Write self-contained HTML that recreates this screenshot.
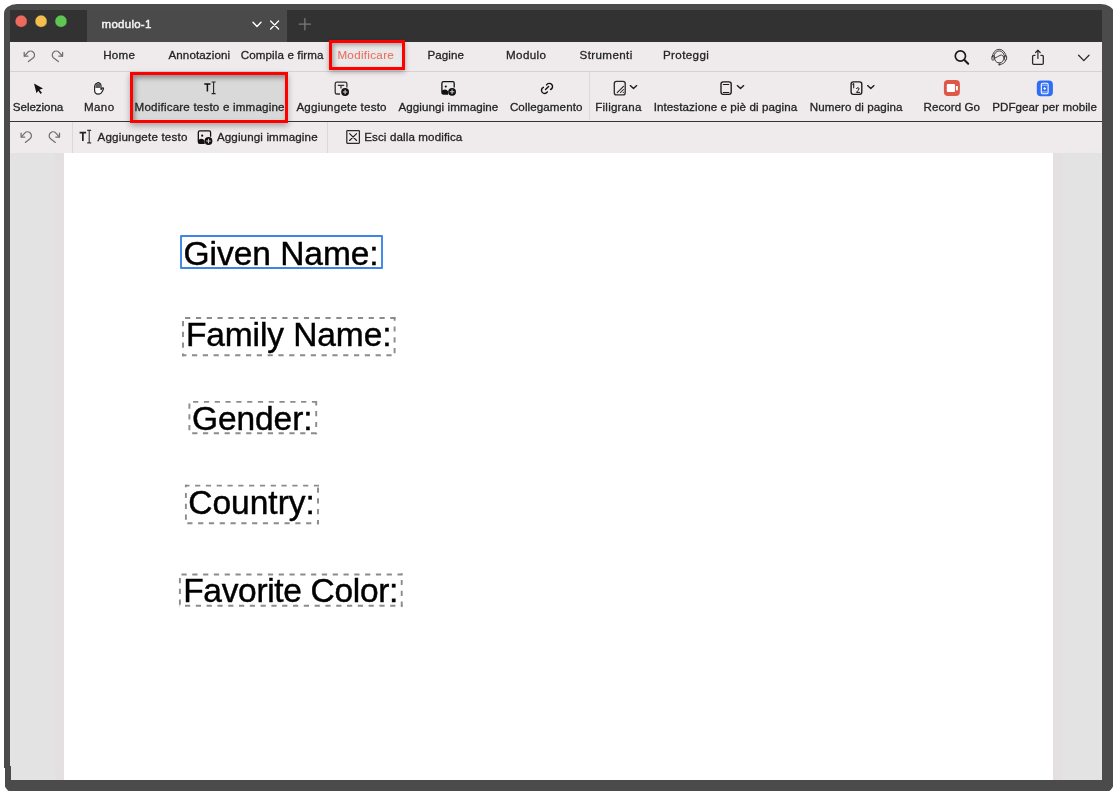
<!DOCTYPE html>
<html><head><meta charset="utf-8">
<style>
*{box-sizing:border-box;margin:0;padding:0}
html,body{width:1113px;height:791px;overflow:hidden;background:#fff;font-family:"Liberation Sans",sans-serif}
.r{position:absolute}
.t{position:absolute;white-space:pre;line-height:20px;font-family:"Liberation Sans",sans-serif;transform:translateZ(0);-webkit-text-stroke:0.3px currentColor}
svg{position:absolute;left:0;top:0}
</style></head><body>
<div class="r" style="left:4px;top:4px;width:1110px;height:789px;background:#4b4b4b;border-radius:13px 13px 11px 11px / 9.5px 9.5px 11px 11px"></div>
<div class="r" style="left:4px;top:768px;width:1px;height:23px;background:#fff"></div>
<div class="r" style="left:10px;top:10px;width:1092px;height:32px;background:#323232"></div>
<div class="r" style="left:87px;top:10px;width:200px;height:32px;background:#4a4a4a"></div>
<div class="r" style="left:10px;top:42px;width:1092px;height:29px;background:#efebec"></div>
<div class="r" style="left:10px;top:71px;width:1092px;height:1px;background:#d6d2d3"></div>
<div class="r" style="left:10px;top:72px;width:1092px;height:49px;background:#efebec"></div>
<div class="r" style="left:10px;top:121px;width:1092px;height:1px;background:#353535"></div>
<div class="r" style="left:10px;top:122px;width:1092px;height:1px;background:#a9a6a7"></div>
<div class="r" style="left:10px;top:122px;width:1092px;height:31px;background:#efebec"></div>
<div class="r" style="left:589px;top:72px;width:1px;height:48px;background:#dcd8d9"></div>
<div class="r" style="left:72px;top:122px;width:1px;height:31px;background:#dcd8d9"></div>
<div class="r" style="left:327px;top:122px;width:1px;height:31px;background:#dcd8d9"></div>
<div class="r" style="left:10px;top:153px;width:1092px;height:627px;background:#e3e3e3"></div>
<div class="r" style="left:10px;top:766px;width:1px;height:14px;background:#4b4b4b"></div>
<div class="r" style="left:55px;top:153px;width:1007px;height:627px;background:#e4dfe0"></div>
<div class="r" style="left:64px;top:153px;width:989px;height:627px;background:#ffffff"></div>
<!-- selected tool button -->
<div class="r" style="left:130px;top:72px;width:158px;height:51px;box-shadow:0 3px 6px rgba(0,0,0,.3)"></div>
<div class="r" style="left:133px;top:75px;width:152px;height:45px;background:#d9d9d9;box-shadow:inset 2px 3px 5px rgba(0,0,0,.35)"></div>
<div class="r" style="left:130px;top:72px;width:158px;height:51px;border:3px solid #ff0000"></div>
<!-- Modificare menu box -->
<div class="r" style="left:329px;top:40px;width:76px;height:30px;box-shadow:0 2px 5px rgba(0,0,0,.3)"></div>
<div class="r" style="left:332px;top:43px;width:70px;height:24px;background:#ebe8e9;box-shadow:inset 2px 2px 4px rgba(0,0,0,.3)"></div>
<div class="r" style="left:329px;top:40px;width:76px;height:30px;border:3px solid #ff0000"></div>
<svg width="1113" height="791" viewBox="0 0 1113 791" fill="none" stroke-linecap="round" stroke-linejoin="round">
<!-- traffic lights -->
<circle cx="21.2" cy="21.2" r="6.1" fill="#ec6a5e" stroke="#2a2a2a" stroke-width="0.5"/>
<circle cx="41.1" cy="21.2" r="6.1" fill="#f4bf4f" stroke="#2a2a2a" stroke-width="0.5"/>
<circle cx="61.0" cy="21.2" r="6.1" fill="#61c554" stroke="#2a2a2a" stroke-width="0.5"/>
<!-- tab chevron, close, plus -->
<path d="M253 22.3 L257 26.4 L261 22.3" stroke="#ffffff" stroke-width="1.4"/>
<path d="M270.6 21 L278.6 29 M278.6 21 L270.6 29" stroke="#ffffff" stroke-width="1.3"/>
<path d="M304.9 18.6 V29.8 M299.3 24.2 H310.5" stroke="#7a7a7a" stroke-width="1.3"/>
<!-- undo/redo main -->
<g id="ur" stroke="#707070" stroke-width="1.25">
<path d="M24.2 52.3 V56.2 H27.9"/>
<path d="M24.5 56 L27.8 52.3 A3.9 3.9 0 1 1 33.4 57.8 L28.4 61.6"/>
<g transform="translate(86.8,0) scale(-1,1)">
<path d="M24.2 52.3 V56.2 H27.9"/>
<path d="M24.5 56 L27.8 52.3 A3.9 3.9 0 1 1 33.4 57.8 L28.4 61.6"/>
</g>
</g>
<g transform="translate(-3.1,80.8)"><g stroke="#707070" stroke-width="1.25">
<path d="M24.2 52.3 V56.2 H27.9"/>
<path d="M24.5 56 L27.8 52.3 A3.9 3.9 0 1 1 33.4 57.8 L28.4 61.6"/>
<g transform="translate(86.8,0) scale(-1,1)">
<path d="M24.2 52.3 V56.2 H27.9"/>
<path d="M24.5 56 L27.8 52.3 A3.9 3.9 0 1 1 33.4 57.8 L28.4 61.6"/>
</g>
</g></g>
<!-- search -->
<circle cx="960.4" cy="56" r="5.1" stroke="#1a1a1a" stroke-width="1.7"/>
<path d="M964.2 59.8 L968.2 63.8" stroke="#1a1a1a" stroke-width="2"/>
<!-- headset -->
<g stroke="#3c3c3c" stroke-width="0.95">
<path d="M992.3 57.2 A6.9 7.9 0 0 1 1006.1 57.2"/>
<path d="M993.9 57 A5.3 6.1 0 0 1 1004.5 57"/>
<path d="M994.5 56.8 Q994.4 62.8 999.2 62.8 Q1004.1 62.8 1004 56.8"/>
<path d="M994.7 58.2 Q997.5 56.6 1001.2 54.9 Q1003 55.3 1003.9 57.2"/>
<rect x="991.9" y="55.6" width="2.2" height="4.6" rx="1"/>
<rect x="1004.4" y="55.6" width="2.2" height="4.6" rx="1"/>
<path d="M1005.6 60.3 Q1005 64.2 999.6 64.4"/>
</g>
<circle cx="999.4" cy="64.4" r="1.1" fill="#3c3c3c"/>
<!-- share -->
<path d="M1035 55.3 H1033.7 Q1032.6 55.3 1032.6 56.4 V63.3 Q1032.6 64.4 1033.7 64.4 H1042.2 Q1043.3 64.4 1043.3 63.3 V56.4 Q1043.3 55.3 1042.2 55.3 H1040.9" stroke="#2a2a2a" stroke-width="1.3"/>
<path d="M1037.9 50.3 V58.5 M1035.6 52.5 L1037.9 50.2 L1040.2 52.5" stroke="#2a2a2a" stroke-width="1.2"/>
<!-- chevron right -->
<path d="M1078.6 55.3 L1083.8 60.6 L1089 55.3" stroke="#2a2a2a" stroke-width="1.3"/>

<!-- Seleziona cursor -->
<path d="M34 83.6 L43 88.5 L39.4 89.7 L41.9 92.7 L40.6 93.9 L38.2 90.7 L36.5 93.2 Z" fill="#111"/>
<!-- Mano hand -->
<path d="M94.6 86.3 Q95 83.7 97.1 83.1 L98.3 82.5 L99.5 83.1 Q100.9 83.8 101 85.6 V89.6 L102.2 88.1 Q103.3 87.4 103.5 88.7 L102.3 91.4 Q101.3 94.1 98.4 94.1 Q94.6 94.1 94.6 90.3 Z" fill="#ffffff" stroke="#262626" stroke-width="1.2"/>
<path d="M95.3 88 V86.4 Q95.6 84.2 97.3 83.8 L98.3 83.2 L99.3 83.8 Q100.4 84.4 100.4 85.8 V88 Z" fill="#5e5e5e"/>
<!-- T I-beam (selected) -->
<path d="M204.3 83.9 H210.5 M207.4 83.9 V91.4" stroke="#111" stroke-width="1.5" stroke-linecap="butt"/>
<path d="M211.6 82 H215.6 M211.6 93.6 H215.6 M213.6 82 V93.6" stroke="#222" stroke-width="1.1" stroke-linecap="butt"/>
<!-- Aggiungete testo icon -->
<path d="M340 94 H336.8 Q335.2 94 335.2 92.4 V83.8 Q335.2 82.2 336.8 82.2 H345.3 Q346.9 82.2 346.9 83.8 V87.5" stroke="#333" stroke-width="1.3" stroke-linecap="butt"/>
<path d="M337.8 85.4 H344.2 M341 85.4 V88.4" stroke="#333" stroke-width="1.3" stroke-linecap="butt"/>
<circle cx="345.1" cy="92" r="3.9" fill="#111"/>
<path d="M345.1 89.8 V94.2 M342.9 92 H347.3" stroke="#cfcfcf" stroke-width="1.1" stroke-linecap="butt"/>
<!-- Aggiungi immagine icon -->
<g id="imgicon">
<path d="M448.2 94.1 H443.5 Q441.9 94.1 441.9 92.5 V83.3 Q441.9 81.7 443.5 81.7 H452.7 Q454.2 81.7 454.2 83.3 V87.5" stroke="#111" stroke-width="1.3" stroke-linecap="butt"/>
<circle cx="445.8" cy="86.5" r="1.1" fill="#111"/>
<path d="M442 90.5 Q444 89.5 445 89.5 Q447 89.5 448.2 91.5 V94.1 H442 Z" fill="#111"/>
<circle cx="452.1" cy="91.8" r="3.9" fill="#111"/>
<path d="M452.1 89.6 V94 M449.9 91.8 H454.3" stroke="#cfcfcf" stroke-width="1.1" stroke-linecap="butt"/>
</g>
<!-- Collegamento link -->
<g stroke="#111" stroke-width="1.4">
<path d="M546.6 84.9 A3.2 3.2 0 1 1 550.6 89.5"/>
<path d="M547.4 91.9 A3.2 3.2 0 1 1 543.4 87.3"/>
<path d="M545.5 89.5 L548.6 86.4"/>
</g>
<!-- Filigrana -->
<rect x="614.3" y="81.4" width="10.9" height="13.5" rx="2.2" stroke="#2c2c2c" stroke-width="1.35"/>
<path d="M617.2 92.6 L623.5 86.3 M620.5 92.5 L623.5 89.5 M623.2 92.5 L623.4 92.3" stroke="#1e1e1e" stroke-width="1.05"/>
<path d="M630.3 85.6 L633.5 88.6 L636.7 85.6" stroke="#1a1a1a" stroke-width="1.35"/>
<!-- Intestazione -->
<rect x="721" y="81.9" width="10.2" height="12.4" rx="2.2" stroke="#1a1a1a" stroke-width="1.35"/>
<path d="M723.3 84.5 H728.8 M723.3 92.5 H728.8" stroke="#1a1a1a" stroke-width="1.1"/>
<path d="M737.3 85.6 L740.5 88.6 L743.7 85.6" stroke="#1a1a1a" stroke-width="1.35"/>
<!-- Numero di pagina -->
<rect x="851.1" y="81.9" width="10.7" height="12.4" rx="2.2" stroke="#1a1a1a" stroke-width="1.35"/>
<path d="M852.8 84.4 L853.7 83.6 V87.7" stroke="#1a1a1a" stroke-width="1.05"/>
<path d="M856.5 88.6 Q856.8 87.7 857.9 87.7 Q859.1 87.8 859 88.9 Q858.8 90 856.4 92.4 H859.6" stroke="#1a1a1a" stroke-width="1"/>
<path d="M867.6 85.6 L870.8 88.6 L874 85.6" stroke="#1a1a1a" stroke-width="1.35"/>
<!-- Record Go -->
<rect x="943.9" y="80.1" width="16" height="15.9" rx="4" fill="#de5849"/>
<rect x="946.8" y="84" width="8.2" height="8.1" rx="1" fill="#ffffff"/>
<rect x="955.9" y="86" width="2" height="4.2" rx="0.5" fill="#ffffff"/>
<!-- PDFgear -->
<rect x="1036.8" y="80.5" width="16.1" height="15.7" rx="4" fill="#2f6ef4"/>
<rect x="1041.3" y="83.3" width="6.8" height="10.4" rx="1.2" stroke="#ffffff" stroke-width="1.1"/>
<path d="M1042.5 85.2 H1046.9 M1042.5 92 H1046.9" stroke="#cfe0ff" stroke-width="0.8"/>
<path d="M1043.2 88.6 L1044.7 87.1 L1046.2 88.6 L1044.7 90.1 Z" fill="#ffffff"/>

<!-- secondary toolbar T I-beam -->
<path d="M79.6 132.7 H86.1 M82.85 132.7 V140.9" stroke="#222" stroke-width="1.7" stroke-linecap="butt"/>
<path d="M87.2 130.4 H91.2 M87.2 142.9 H91.2 M89.2 130.4 V142.9" stroke="#333" stroke-width="1.1" stroke-linecap="butt"/>
<g transform="translate(-243.6,49.2)"><g>
<path d="M448.2 94.1 H443.5 Q441.9 94.1 441.9 92.5 V83.3 Q441.9 81.7 443.5 81.7 H452.7 Q454.2 81.7 454.2 83.3 V87.5" stroke="#111" stroke-width="1.3" stroke-linecap="butt"/>
<circle cx="445.8" cy="86.5" r="1.1" fill="#111"/>
<path d="M442 90.5 Q444 89.5 445 89.5 Q447 89.5 448.2 91.5 V94.1 H442 Z" fill="#111"/>
<circle cx="452.1" cy="91.8" r="3.9" fill="#111"/>
<path d="M452.1 89.6 V94 M449.9 91.8 H454.3" stroke="#cfcfcf" stroke-width="1.1" stroke-linecap="butt"/>
</g></g>
<!-- X box -->
<rect x="346.8" y="130.7" width="12.6" height="12.6" rx="0.5" stroke="#2a2a2a" stroke-width="1.25"/>
<path d="M349.6 133.6 L356.6 140.5 M356.6 133.6 L349.6 140.5" stroke="#1a1a1a" stroke-width="1.1"/>

<!-- document boxes -->
<rect x="181" y="236" width="201" height="32" stroke="#3d86e8" stroke-width="1.9"/>
<g stroke="#8c8c8c" stroke-width="1.9" stroke-dasharray="5.2 5.6" stroke-linecap="butt">
<path d="M182.05 318 H395.55" stroke-dashoffset="7.75"/>
<path d="M394.6 317.05 V356.15" stroke-dashoffset="1.45"/>
<path d="M182.05 355.2 H395.55" stroke-dashoffset="0.85"/>
<path d="M183 317.05 V356.15" stroke-dashoffset="6.85"/>
<path d="M188.45 401.9 H317.15" stroke-dashoffset="6.15"/>
<path d="M316.2 400.95 V434.15" stroke-dashoffset="0.65"/>
<path d="M188.45 433.2 H317.15" stroke-dashoffset="7.05"/>
<path d="M189.4 400.95 V434.15" stroke-dashoffset="8.25"/>
<path d="M184.95 485.6 H318.95" stroke-dashoffset="0.65"/>
<path d="M318 484.65 V524.15" stroke-dashoffset="7.95"/>
<path d="M184.95 523.2 H318.95" stroke-dashoffset="8.45"/>
<path d="M185.9 484.65 V524.15" stroke-dashoffset="2.55"/>
<path d="M178.95 574.5 H402.65" stroke-dashoffset="8.25"/>
<path d="M401.7 573.55 V606.75" stroke-dashoffset="4.45"/>
<path d="M178.95 605.8 H402.65" stroke-dashoffset="4.75"/>
<path d="M179.9 573.55 V606.75" stroke-dashoffset="6.35"/>
</g>
</svg>

<div class="t" style="left:103.20px;top:44.98px;font-size:11.6px;letter-spacing:0.300px;color:#242424;">Home</div>
<div class="t" style="left:168.40px;top:44.98px;font-size:11.6px;letter-spacing:0.120px;color:#242424;">Annotazioni</div>
<div class="t" style="left:240.70px;top:44.98px;font-size:11.6px;letter-spacing:0.121px;color:#242424;">Compila e firma</div>
<div class="t" style="left:337.40px;top:44.98px;font-size:11.6px;letter-spacing:0.322px;color:#e8705f;-webkit-text-stroke:0.1px #e8705f;">Modificare</div>
<div class="t" style="left:427.60px;top:44.98px;font-size:11.6px;letter-spacing:0.040px;color:#242424;">Pagine</div>
<div class="t" style="left:506.00px;top:44.98px;font-size:11.6px;letter-spacing:0.400px;color:#242424;">Modulo</div>
<div class="t" style="left:579.60px;top:44.98px;font-size:11.6px;letter-spacing:0.375px;color:#242424;">Strumenti</div>
<div class="t" style="left:663.00px;top:44.98px;font-size:11.6px;letter-spacing:0.371px;color:#242424;">Proteggi</div>
<div class="t" style="left:12.80px;top:96.98px;font-size:11.6px;letter-spacing:-0.050px;color:#242424;">Seleziona</div>
<div class="t" style="left:83.90px;top:96.98px;font-size:11.6px;letter-spacing:0.433px;color:#242424;">Mano</div>
<div class="t" style="left:134.60px;top:96.98px;font-size:11.6px;letter-spacing:0.192px;color:#242424;">Modificare testo e immagine</div>
<div class="t" style="left:296.40px;top:96.98px;font-size:11.6px;letter-spacing:0.207px;color:#242424;">Aggiungete testo</div>
<div class="t" style="left:398.50px;top:96.98px;font-size:11.6px;letter-spacing:0.075px;color:#242424;">Aggiungi immagine</div>
<div class="t" style="left:509.90px;top:96.98px;font-size:11.6px;letter-spacing:0.091px;color:#242424;">Collegamento</div>
<div class="t" style="left:595.30px;top:96.98px;font-size:11.6px;letter-spacing:0.200px;color:#242424;">Filigrana</div>
<div class="t" style="left:653.70px;top:96.98px;font-size:11.6px;letter-spacing:0.085px;color:#242424;">Intestazione e piè di pagina</div>
<div class="t" style="left:809.80px;top:96.98px;font-size:11.6px;letter-spacing:0.080px;color:#242424;">Numero di pagina</div>
<div class="t" style="left:923.50px;top:96.98px;font-size:11.6px;letter-spacing:0.050px;color:#242424;">Record Go</div>
<div class="t" style="left:992.20px;top:96.98px;font-size:11.6px;letter-spacing:0.059px;color:#242424;">PDFgear per mobile</div>
<div class="t" style="left:97.50px;top:126.98px;font-size:11.6px;letter-spacing:0.187px;color:#242424;">Aggiungete testo</div>
<div class="t" style="left:216.90px;top:126.98px;font-size:11.6px;letter-spacing:0.131px;color:#242424;">Aggiungi immagine</div>
<div class="t" style="left:364.20px;top:126.98px;font-size:11.6px;letter-spacing:0.117px;color:#242424;">Esci dalla modifica</div>
<div class="t" style="left:101.60px;top:13.62px;font-size:11.5px;letter-spacing:0.257px;color:#f4f4f4;-webkit-text-stroke:0.45px #f4f4f4;">modulo-1</div>
<div class="t" style="left:183.60px;top:244.19px;font-size:33.5px;letter-spacing:-0.040px;color:#000;-webkit-text-stroke:0.45px #000;">Given Name:</div>
<div class="t" style="left:185.90px;top:324.89px;font-size:33.5px;letter-spacing:-0.091px;color:#000;-webkit-text-stroke:0.45px #000;">Family Name:</div>
<div class="t" style="left:192.00px;top:409.39px;font-size:33.5px;letter-spacing:-0.083px;color:#000;-webkit-text-stroke:0.45px #000;">Gender:</div>
<div class="t" style="left:188.20px;top:492.89px;font-size:33.5px;letter-spacing:0.014px;color:#000;-webkit-text-stroke:0.45px #000;">Country:</div>
<div class="t" style="left:183.20px;top:581.49px;font-size:33.5px;letter-spacing:-0.321px;color:#000;-webkit-text-stroke:0.45px #000;">Favorite Color:</div>
</body></html>
